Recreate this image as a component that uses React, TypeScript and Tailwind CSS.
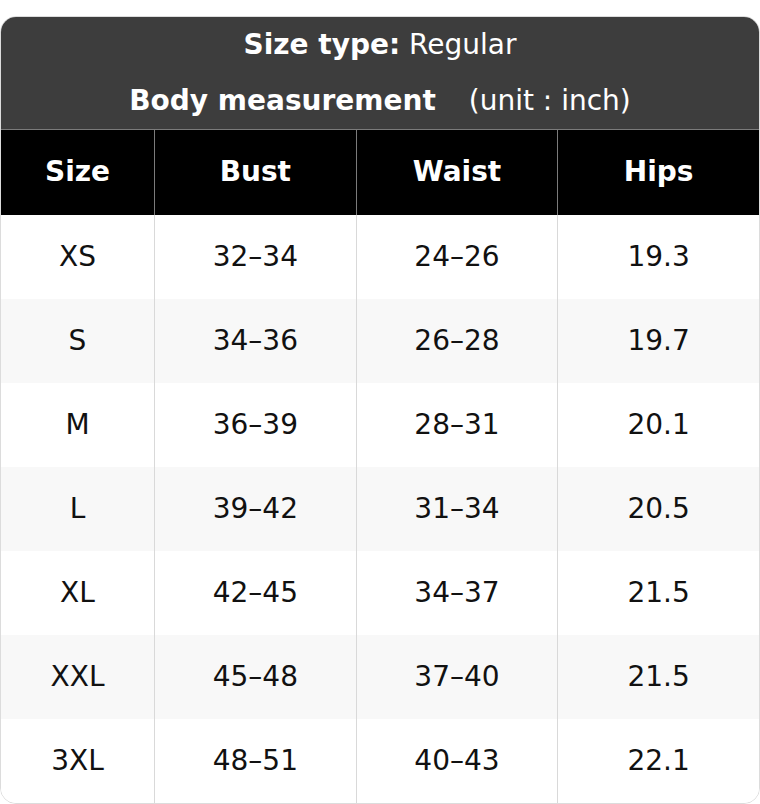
const rows = [
  { size: 'XS', bust: '32–34', waist: '24–26', hips: '19.3' },
  { size: 'S', bust: '34–36', waist: '26–28', hips: '19.7' },
  { size: 'M', bust: '36–39', waist: '28–31', hips: '20.1' },
  { size: 'L', bust: '39–42', waist: '31–34', hips: '20.5' },
  { size: 'XL', bust: '42–45', waist: '34–37', hips: '21.5' },
  { size: 'XXL', bust: '45–48', waist: '37–40', hips: '21.5' },
  { size: '3XL', bust: '48–51', waist: '40–43', hips: '22.1' },
];

const headers = ['Size', 'Bust', 'Waist', 'Hips'];

export default function App() {
  return (
    <div className="pt-4 bg-white" style={{ fontFamily: '"DejaVu Sans", Verdana, sans-serif' }}>
      <div className="overflow-hidden rounded-[16px] border border-[#dcdcdc] text-[28px]">
        <div className="bg-[#3d3d3d] text-white border-b border-[#7b7b7b] pb-[1px]">
          <div className="h-[56px] flex items-center justify-center">
            <span className="font-bold">Size type:</span>
            <span>&nbsp;Regular</span>
          </div>
          <div className="h-[55px] flex items-center justify-center">
            <span className="font-bold">Body measurement</span>
            <span className="ml-[33px]">(unit : inch)</span>
          </div>
        </div>

        <div className="grid grid-cols-[153px_1fr_1fr_1fr] bg-black text-white font-bold">
          {headers.map((h, i) => (
            <div
              key={h}
              className={`h-[85px] pb-[1px] flex items-center justify-center ${i > 0 ? 'border-l border-[#7b7b7b]' : ''}`}
            >
              {h}
            </div>
          ))}
        </div>

        {rows.map((r, idx) => (
          <div
            key={r.size}
            className={`grid grid-cols-[153px_1fr_1fr_1fr] text-[#111] ${idx % 2 === 1 ? 'bg-[#f8f8f8]' : 'bg-white'}`}
          >
            <div className="h-[84px] flex items-center justify-center">{r.size}</div>
            <div className="h-[84px] flex items-center justify-center border-l border-[#d9d9d9]">{r.bust}</div>
            <div className="h-[84px] flex items-center justify-center border-l border-[#d9d9d9]">{r.waist}</div>
            <div className="h-[84px] flex items-center justify-center border-l border-[#d9d9d9]">{r.hips}</div>
          </div>
        ))}
      </div>
    </div>
  );
}
